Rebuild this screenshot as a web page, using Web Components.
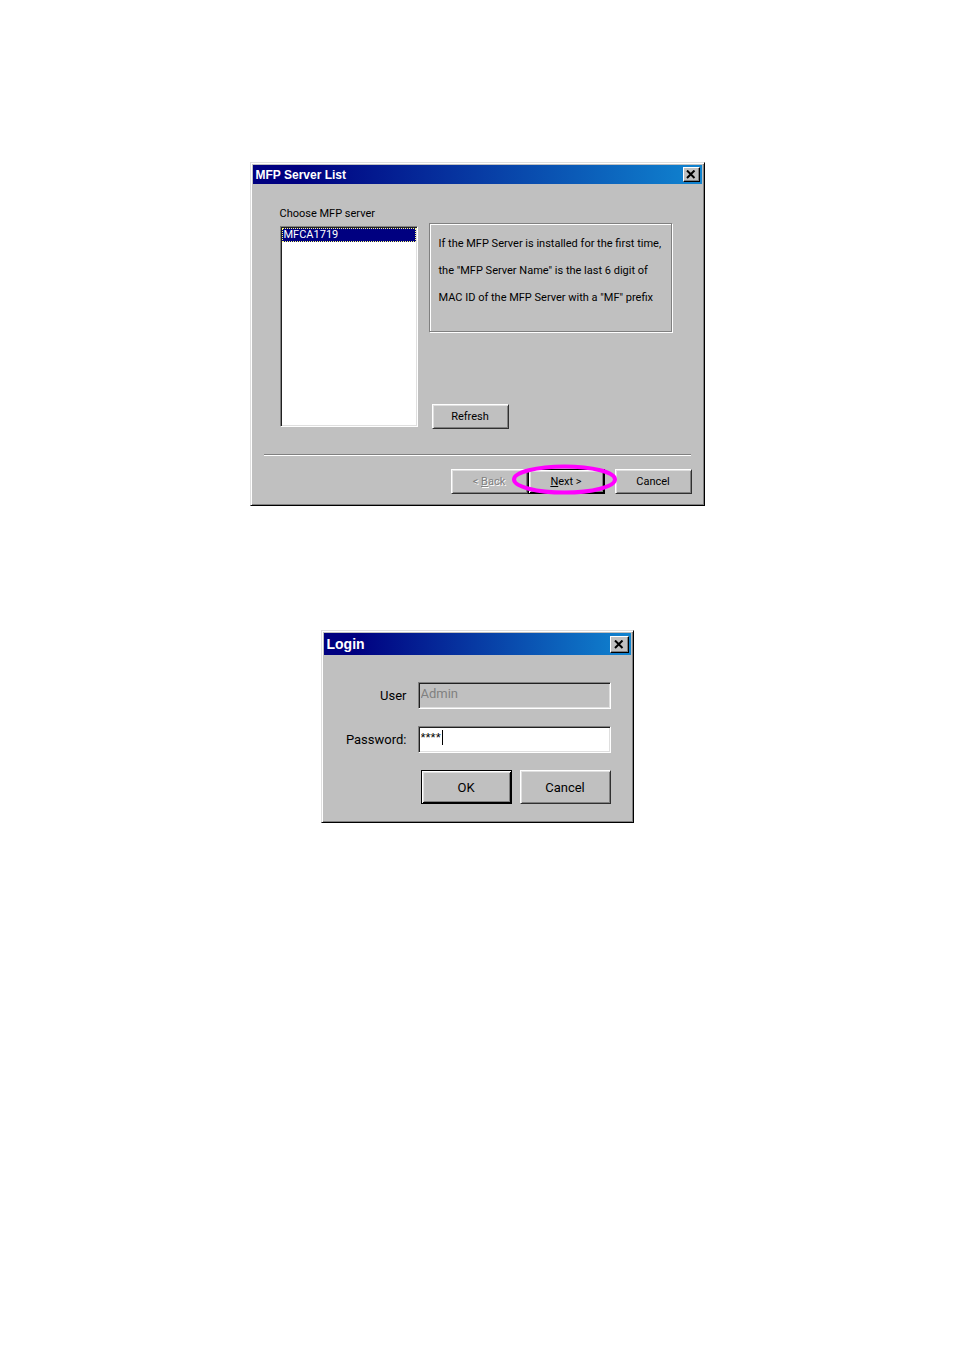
<!DOCTYPE html>
<html lang="en">
<head>
<meta charset="utf-8">
<meta name="viewport" content="width=device-width, initial-scale=1">
<title>MFP Server setup</title>
<style>
    :root {
        --face: #c0c0c0;
        --light: #dfdfdf;
        --shadow: #808080;
        --navy: #000080;
        --ring: #ff00ff;
    }
    body {
        margin: 0;
        padding: 162px 16px;
        background: #fff;
        color: #000;
        font-family: Roboto, "Liberation Sans", Arial, sans-serif;
        font-size: 11px;
    }
    main {
        display: flex;
        flex-direction: column;
        align-items: center;
        gap: 124px;
    }
    server-list-dialog { width: 455px; max-width: 100%; }
    login-dialog { width: 313px; max-width: 100%; }
</style>
</head>
<body>
<main>
    <server-list-dialog></server-list-dialog>
    <login-dialog></login-dialog>
</main>

<script>
// === Helper: attach a shadow root from markup ===
const render = (host, html) => {
    const template = document.createElement('template');
    template.innerHTML = html;
    host.attachShadow({ mode: 'open' }).appendChild(template.content.cloneNode(true));
};


// === Web Component: WinFrame (window border, title bar, close button) ===
class WinFrame extends HTMLElement {
    constructor() {
        super();
        render(this, `
            <style>
                :host {
                    display: block;
                    box-sizing: border-box;
                    padding: 2px;
                    background: var(--face);
                    border: 1px solid;
                    border-color: var(--light) #000 #000 var(--light);
                    box-shadow: inset 1px 1px #fff, inset -1px -1px var(--shadow);
                }
                header {
                    display: flex;
                    align-items: center;
                    justify-content: space-between;
                    box-sizing: border-box;
                    height: var(--bar-height, 19px);
                    padding: 0 2px 0 3px;
                    background: linear-gradient(90deg, var(--navy) 10%, #1084d0);
                    color: #fff;
                }
                h1 {
                    margin: 0;
                    font-family: "Liberation Sans", Arial, sans-serif;
                    font-size: var(--title-size, 12px);
                    font-weight: bold;
                    line-height: 16px;
                }
                button {
                    display: flex;
                    align-items: center;
                    justify-content: center;
                    width: var(--close-width, 17px);
                    height: var(--close-height, 15px);
                    padding: 0;
                    background: var(--face);
                    border: 1px solid;
                    border-color: #fff #000 #000 #fff;
                    box-shadow: inset -1px -1px var(--shadow);
                }
                svg { display: block; width: 10px; height: 9px; }
            </style>
            <header>
                <h1><slot name="title"></slot></h1>
                <button type="button" aria-label="Close">
                    <svg viewBox="0 0 10 9"><path d="M1 0.5 L8.5 8 M8.5 0.5 L1 8" stroke="#000" stroke-width="2"/></svg>
                </button>
            </header>
            <slot></slot>
        `);
    }
}
customElements.define('win-frame', WinFrame);


// === Web Component: WinButton ===
class WinButton extends HTMLElement {
    constructor() {
        super();
        render(this, `
            <style>
                :host { display: block; width: 77px; height: 25px; }
                button {
                    display: block;
                    box-sizing: border-box;
                    width: 100%;
                    height: 100%;
                    padding: 0;
                    background: var(--face);
                    color: #000;
                    font: inherit;
                    border: 1px solid;
                    border-color: #fff #303030 #303030 #fff;
                    box-shadow: inset 1px 1px var(--light), inset -1px -1px var(--shadow);
                }
                :host([default]) button {
                    border-color: #000;
                    box-shadow: inset 1px 1px #fff, inset -1px -1px #000, inset 2px 2px var(--light), inset -2px -2px var(--shadow);
                }
                button:disabled { color: var(--shadow); text-shadow: 1px 1px #fff; }
            </style>
            <button type="button"><slot></slot></button>
        `);
    }

    connectedCallback() {
        this.shadowRoot.querySelector('button').disabled = this.hasAttribute('disabled');
    }
}
customElements.define('win-button', WinButton);


// === Web Component: MarkRing (ellipse drawn round its content) ===
class MarkRing extends HTMLElement {
    constructor() {
        super();
        render(this, `
            <style>
                :host { display: block; position: relative; }
                svg {
                    position: absolute;
                    inset: -5px -12px -1px -16px;
                    width: calc(100% + 28px);
                    height: calc(100% + 6px);
                    overflow: visible;
                    pointer-events: none;
                }
            </style>
            <slot></slot>
            <svg viewBox="0 0 105 31" preserveAspectRatio="none" aria-hidden="true">
                <ellipse cx="52.5" cy="15.5" rx="50.5" ry="13" fill="none" stroke="var(--ring)" stroke-width="4"/>
            </svg>
        `);
    }
}
customElements.define('mark-ring', MarkRing);


// === Web Component: WinField (label and text box of a form grid) ===
class WinField extends HTMLElement {
    constructor() {
        super();
        render(this, `
            <style>
                :host {
                    display: grid;
                    grid-template-columns: 1fr 193px;
                    column-gap: 11px;
                    align-items: center;
                }
                label { text-align: right; }
                .box { position: relative; display: flex; }
                input {
                    box-sizing: border-box;
                    width: 100%;
                    height: 27px;
                    margin: 0;
                    padding: 0 2px 4px;
                    background: #fff;
                    color: #000;
                    font: inherit;
                    border: 1px solid;
                    border-color: var(--shadow) #fff #fff var(--shadow);
                    box-shadow: inset 1px 1px #202020, inset -1px -1px var(--light);
                    outline: none;
                }
                input:disabled { background: var(--face); color: var(--shadow); }
                .caret { display: none; }
                :host([caret]) input { font-family: "Liberation Sans", Arial, sans-serif; }
                :host([caret]) .caret {
                    display: block;
                    position: absolute;
                    left: 24px;
                    top: 4px;
                    width: 1px;
                    height: 15px;
                    background: #000;
                }
            </style>
            <label for="input"><slot></slot></label>
            <div class="box"><input id="input" type="text"><span class="caret"></span></div>
        `);
    }

    connectedCallback() {
        const input = this.shadowRoot.getElementById('input');
        input.value = this.getAttribute('value') || '';
        input.disabled = this.hasAttribute('disabled');
        input.setAttribute('aria-label', this.textContent);
    }
}
customElements.define('win-field', WinField);


// === Web Component: ServerListDialog ===
class ServerListDialog extends HTMLElement {
    constructor() {
        super();
        render(this, `
            <style>
                :host { display: block; }
                .choose {
                    display: grid;
                    grid-template-columns: 138px 1fr;
                    grid-template-rows: minmax(224px, auto);
                    column-gap: 11px;
                    padding: 21px 30px 25px 27px;
                }
                .list { display: flex; flex-direction: column; gap: 3px; }
                label { line-height: 18px; }
                select {
                    box-sizing: border-box;
                    width: 100%;
                    height: 201px;
                    padding: 1px;
                    background: #fff;
                    font: inherit;
                    border: 1px solid;
                    border-color: var(--shadow) #fff #fff var(--shadow);
                    border-radius: 0;
                    box-shadow: inset 1px 1px #202020, inset -1px -1px var(--light);
                    outline: none;
                    overflow: hidden;
                }
                option {
                    box-sizing: border-box;
                    min-height: 14px;
                    height: 14px;
                    padding: 0 2px;
                    line-height: 14px;
                }
                option:checked {
                    background: var(--navy);
                    color: #fff;
                    outline: 1px dotted #ffff80;
                    outline-offset: -1px;
                }
                .side {
                    display: flex;
                    flex-direction: column;
                    justify-content: space-between;
                    padding-top: 18px;
                }
                .note {
                    box-sizing: border-box;
                    min-height: 109px;
                    margin: 0;
                    padding: 6px 9px;
                    line-height: 27px;
                    white-space: nowrap;
                    border: 1px solid var(--shadow);
                    box-shadow: 1px 1px #fff, inset 1px 1px #fff;
                }
                .refresh { margin-left: 3px; }
                hr {
                    height: 1px;
                    margin: 0 11px;
                    border: 0;
                    border-top: 1px solid var(--shadow);
                    background: #fff;
                }
                footer {
                    display: flex;
                    justify-content: flex-end;
                    padding: 13px 10px 9px;
                }
                footer .cancel { margin-left: 10px; }
            </style>
            <win-frame>
                <span slot="title">MFP Server List</span>
                <div class="choose">
                    <div class="list">
                        <label for="servers">Choose MFP server</label>
                        <select id="servers" size="12">
                            <option selected>MFCA1719</option>
                        </select>
                    </div>
                    <div class="side">
                        <p class="note">If the MFP Server is installed for the first time,<br>the "MFP Server Name" is the last 6 digit of<br>MAC ID of the MFP Server with a "MF" prefix</p>
                        <win-button class="refresh">Refresh</win-button>
                    </div>
                </div>
                <hr>
                <footer>
                    <win-button disabled>&lt; <u>B</u>ack</win-button>
                    <mark-ring><win-button default><u>N</u>ext &gt;</win-button></mark-ring>
                    <win-button class="cancel">Cancel</win-button>
                </footer>
            </win-frame>
        `);
    }
}
customElements.define('server-list-dialog', ServerListDialog);


// === Web Component: LoginDialog ===
class LoginDialog extends HTMLElement {
    constructor() {
        super();
        render(this, `
            <style>
                :host { display: block; font-size: 13px; }
                win-frame {
                    --bar-height: 22px;
                    --title-size: 14px;
                    --close-width: 19px;
                    --close-height: 17px;
                }
                form {
                    display: flex;
                    flex-direction: column;
                    gap: 17px;
                    padding: 27px 20px 16px;
                }
                .buttons { display: flex; justify-content: flex-end; gap: 8px; }
                .buttons win-button { width: 91px; height: 34px; }
            </style>
            <win-frame>
                <span slot="title">Login</span>
                <form>
                    <win-field value="Admin" disabled>User</win-field>
                    <win-field value="****" caret>Password:</win-field>
                    <div class="buttons">
                        <win-button default>OK</win-button>
                        <win-button>Cancel</win-button>
                    </div>
                </form>
            </win-frame>
        `);
    }
}
customElements.define('login-dialog', LoginDialog);
</script>
</body>
</html>
